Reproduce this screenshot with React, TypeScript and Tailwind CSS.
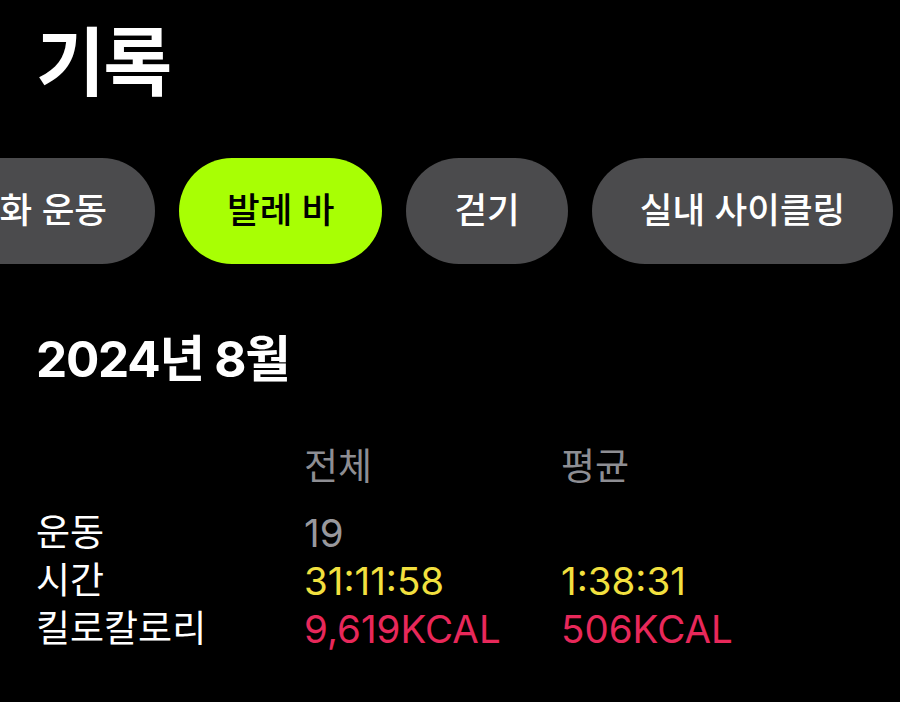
const font = "font-['Inter','Noto_Sans_CJK_KR',sans-serif]"

const pills = [
  { label: "코어 강화 운동", active: false, first: true },
  { label: "발레 바", active: true },
  { label: "걷기", active: false },
  { label: "실내 사이클링", active: false },
]

const rows = [
  { label: "운동", total: "19", avg: "", totalColor: "text-[#98989d]", avgColor: "" },
  { label: "시간", total: "31:11:58", avg: "1:38:31", totalColor: "text-[#f2e03f]", avgColor: "text-[#f2e03f]" },
  { label: "킬로칼로리", total: "9,619KCAL", avg: "506KCAL", totalColor: "text-[#e8285a]", avgColor: "text-[#e8285a]" },
]

export default function App() {
  return (
    <div className={`w-[900px] h-[702px] bg-black text-white overflow-hidden ${font}`}>
      {/* Title */}
      <div className="pt-[25px] px-[36px]">
        <h1 className="text-[75px] leading-none font-bold h-[74px] tracking-tight">기록</h1>
      </div>

      {/* Category pills, scrolled horizontally */}
      <div className="mt-[59px] overflow-hidden">
        <div className="flex gap-6 ml-[-85px] w-max">
          {pills.map((p) => (
            <div
              key={p.label}
              className={`h-[106px] rounded-full flex items-center justify-center px-12 text-[35.5px] font-medium whitespace-nowrap ${
                p.active ? "bg-[#a8ff04] text-black" : "bg-[#4b4b4d] text-white"
              } ${p.first ? "w-[240px] justify-end" : ""}`}
            >
              {p.label}
            </div>
          ))}
        </div>
      </div>

      {/* Month */}
      <div className="mt-[71px] px-[36px]">
        <h2 className="text-[49.5px] leading-none font-bold h-[48px] tracking-tight">2024년 8월</h2>
      </div>

      {/* Stats table */}
      <div className="mt-[60px] px-[36px] grid grid-cols-[268px_257px_1fr] leading-[48px]">
        <div />
        <div className="text-[37px] text-[#8e8e93]">전체</div>
        <div className="text-[37px] text-[#8e8e93]">평균</div>

        <div className="col-span-3 h-[18px]" />

        {rows.map((r) => (
          <div key={r.label} className="contents">
            <div className="text-[37px] text-white">{r.label}</div>
            <div className={`text-[38.5px] ${r.totalColor}`}>{r.total}</div>
            <div className={`text-[38.5px] ${r.avgColor}`}>{r.avg}</div>
          </div>
        ))}
      </div>
    </div>
  )
}
